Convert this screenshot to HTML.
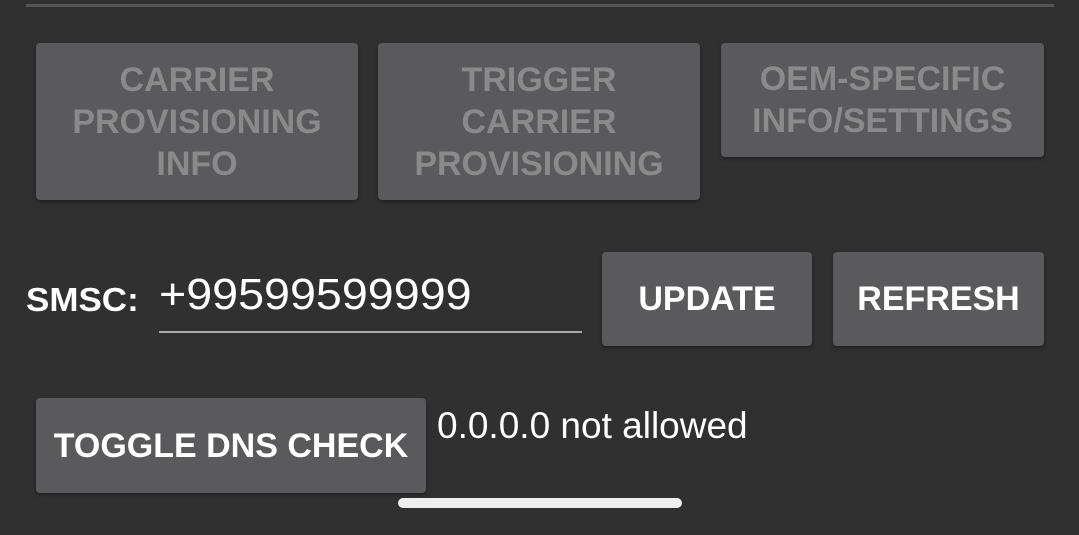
<!DOCTYPE html>
<html><head><style>
body{margin:0;width:1079px;height:535px;background:#303030;overflow:hidden;position:relative;font-family:"Liberation Sans",sans-serif}
.b{position:absolute;background:#5a5a5c;border-radius:4px;box-shadow:0 2px 4px rgba(0,0,0,.35);display:flex;align-items:center;justify-content:center;text-align:center}
.t{display:inline-block;font-weight:bold;font-size:34px;line-height:42px;white-space:nowrap}
.d{color:#8a8a8a}
.w{color:#fff}
.a{position:absolute;white-space:nowrap}
</style></head><body>
<div style="position:absolute;left:26px;top:4px;width:1028px;height:3px;background:#555"></div>
<div class="b" style="left:36px;top:43px;width:322px;height:157px"><span class="t d">CARRIER<br>PROVISIONING<br>INFO</span></div>
<div class="b" style="left:378px;top:43px;width:322px;height:157px"><span class="t d">TRIGGER<br>CARRIER<br>PROVISIONING</span></div>
<div class="b" style="left:721px;top:43px;width:323px;height:114px"><span class="t d">OEM-SPECIFIC<br>INFO/SETTINGS</span></div>
<div class="a w" style="left:26px;top:281px;font-weight:bold;font-size:33px;transform:scaleX(1.06);transform-origin:left">SMSC:</div>
<div class="a w" style="left:159px;top:270px;font-size:44px;transform:scaleX(1.06);transform-origin:left">+99599599999</div>
<div style="position:absolute;left:159px;top:331px;width:423px;height:2px;background:#aaa"></div>
<div class="b" style="left:602px;top:252px;width:210px;height:94px"><span class="t w">UPDATE</span></div>
<div class="b" style="left:833px;top:252px;width:211px;height:94px"><span class="t w">REFRESH</span></div>
<div class="b" style="left:36px;top:398px;width:390px;height:95px"><span class="t w">TOGGLE DNS CHECK</span></div>
<div class="a w" style="left:437px;top:405px;font-size:37px">0.0.0.0 not allowed</div>
<div style="position:absolute;left:398px;top:498px;width:284px;height:10px;border-radius:5px;background:#eee"></div>
</body></html>
